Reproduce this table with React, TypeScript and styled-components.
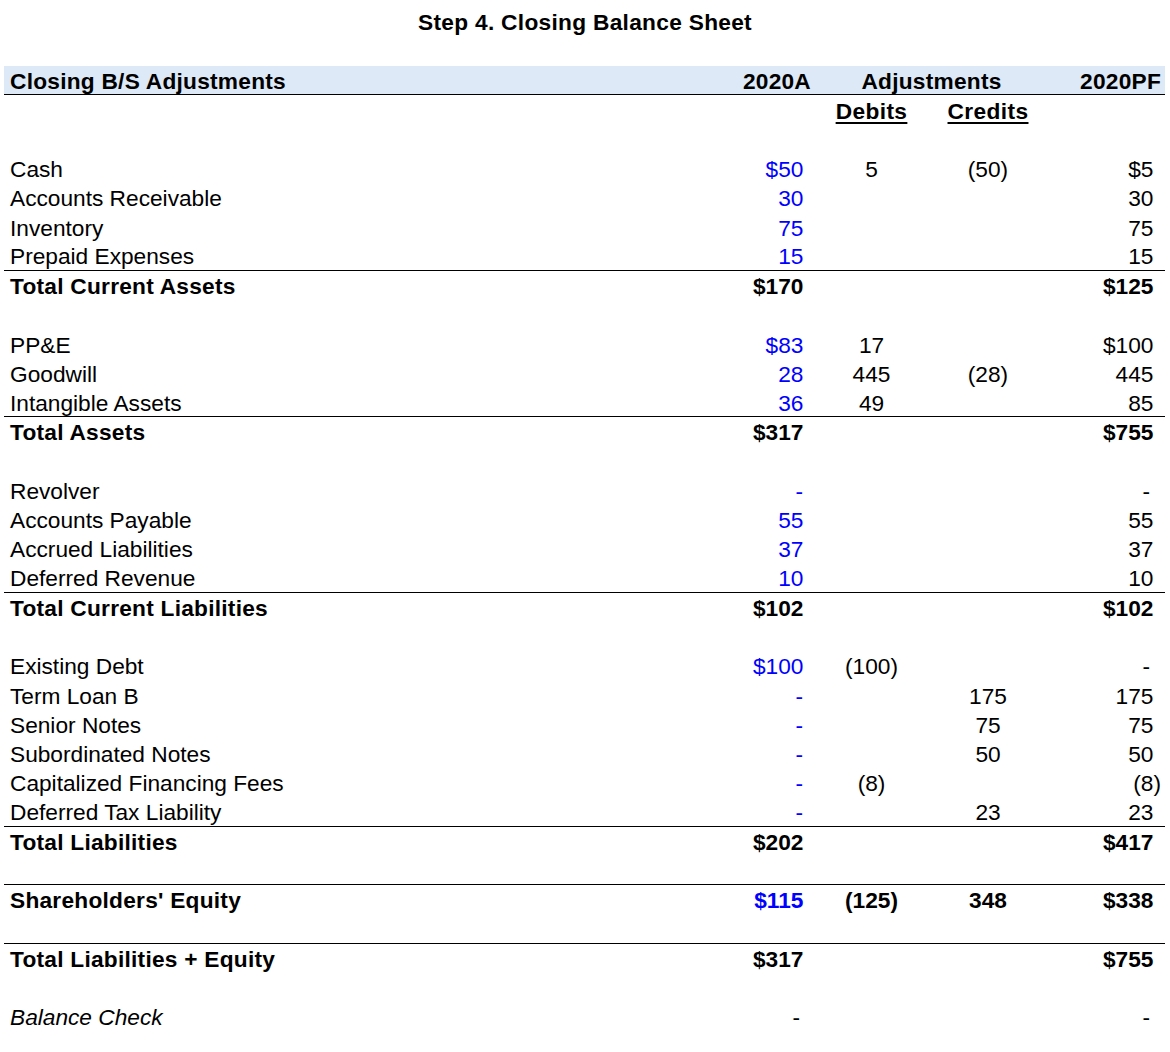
import React from "react";
import styled, { createGlobalStyle, css } from "styled-components";

const GlobalStyle = createGlobalStyle`
  html, body {
    margin: 0;
    padding: 0;
    background: #ffffff;
  }
  body {
    font-family: "Liberation Sans", Arial, sans-serif;
    color: #000000;
  }
`;

const COLS = "716px 95px 113px 120px 117px";
const ROW_H = 29.25;

const Page = styled.div`
  width: 1170px;
  padding: 0 0 0 4px;
  box-sizing: border-box;
  font-size: 22.7px;
`;

const Title = styled.h1`
  margin: 0 0 22px -4px;
  height: 44px;
  line-height: 44px;
  text-align: center;
  font-size: 22.7px;
  font-weight: 700;
  letter-spacing: 0.3px;
`;

const Sheet = styled.div`
  width: 1161px;
  display: flex;
  flex-direction: column;
`;

const Row = styled.div<{ $border?: boolean; $head?: boolean }>`
  display: grid;
  grid-template-columns: ${COLS};
  height: ${ROW_H}px;
  box-sizing: border-box;
  padding-top: 2px;
  align-items: center;
  line-height: 1;
  ${(p) => p.$border && css`border-bottom: 1px solid #000;`}
  ${(p) =>
    p.$head &&
    css`
      background: #dde9f6;
      border-bottom: 1px solid #000;
      font-weight: 700;
      letter-spacing: 0.25px;
    `}
`;

const Label = styled.div<{ $bold?: boolean; $italic?: boolean }>`
  padding-left: 6px;
  white-space: nowrap;
  font-weight: ${(p) => (p.$bold ? 700 : 400)};
  font-style: ${(p) => (p.$italic ? "italic" : "normal")};
  letter-spacing: ${(p) => (p.$bold ? "0.25px" : "0")};
`;

const RightCell = styled.div<{ $bold?: boolean; $blue?: boolean; $pad: number }>`
  text-align: right;
  padding-right: ${(p) => p.$pad}px;
  white-space: nowrap;
  font-weight: ${(p) => (p.$bold ? 700 : 400)};
  color: ${(p) => (p.$blue ? "#0000ff" : "#000000")};
`;

const HeadRight = styled.div`
  text-align: right;
  padding-right: 4px;
  white-space: nowrap;
`;

const CenterCell = styled.div<{ $bold?: boolean }>`
  text-align: center;
  white-space: nowrap;
  font-weight: ${(p) => (p.$bold ? 700 : 400)};
`;

const SpanHead = styled.div`
  grid-column: 3 / span 2;
  text-align: center;
  white-space: nowrap;
`;

const SubHead = styled.div`
  text-align: center;
  font-weight: 700;
  letter-spacing: 0.4px;
  text-decoration: underline;
  text-decoration-thickness: 2px;
  text-underline-offset: 3px;
`;

type Kind = "item" | "total" | "blank" | "equity" | "check";

interface Line {
  kind: Kind;
  label?: string;
  a?: string;
  d?: string;
  c?: string;
  pf?: string;
  border?: boolean;
  blueA?: boolean;
}

const lines: Line[] = [
  { kind: "blank" },
  { kind: "item", label: "Cash", a: "$50", d: "5", c: "(50)", pf: "$5", blueA: true },
  { kind: "item", label: "Accounts Receivable", a: "30", pf: "30", blueA: true },
  { kind: "item", label: "Inventory", a: "75", pf: "75", blueA: true },
  { kind: "item", label: "Prepaid Expenses", a: "15", pf: "15", blueA: true, border: true },
  { kind: "total", label: "Total Current Assets", a: "$170", pf: "$125" },
  { kind: "blank" },
  { kind: "item", label: "PP&E", a: "$83", d: "17", pf: "$100", blueA: true },
  { kind: "item", label: "Goodwill", a: "28", d: "445", c: "(28)", pf: "445", blueA: true },
  { kind: "item", label: "Intangible Assets", a: "36", d: "49", pf: "85", blueA: true, border: true },
  { kind: "total", label: "Total Assets", a: "$317", pf: "$755" },
  { kind: "blank" },
  { kind: "item", label: "Revolver", a: "-", pf: "-", blueA: true },
  { kind: "item", label: "Accounts Payable", a: "55", pf: "55", blueA: true },
  { kind: "item", label: "Accrued Liabilities", a: "37", pf: "37", blueA: true },
  { kind: "item", label: "Deferred Revenue", a: "10", pf: "10", blueA: true, border: true },
  { kind: "total", label: "Total Current Liabilities", a: "$102", pf: "$102" },
  { kind: "blank" },
  { kind: "item", label: "Existing Debt", a: "$100", d: "(100)", pf: "-", blueA: true },
  { kind: "item", label: "Term Loan B", a: "-", c: "175", pf: "175", blueA: true },
  { kind: "item", label: "Senior Notes", a: "-", c: "75", pf: "75", blueA: true },
  { kind: "item", label: "Subordinated Notes", a: "-", c: "50", pf: "50", blueA: true },
  { kind: "item", label: "Capitalized Financing Fees", a: "-", d: "(8)", pf: "(8)", blueA: true },
  { kind: "item", label: "Deferred Tax Liability", a: "-", c: "23", pf: "23", blueA: true, border: true },
  { kind: "total", label: "Total Liabilities", a: "$202", pf: "$417" },
  { kind: "blank", border: true },
  { kind: "equity", label: "Shareholders' Equity", a: "$115", d: "(125)", c: "348", pf: "$338", blueA: true },
  { kind: "blank", border: true },
  { kind: "total", label: "Total Liabilities + Equity", a: "$317", pf: "$755" },
  { kind: "blank" },
  { kind: "check", label: "Balance Check", a: "-", pf: "-" },
];

const padFor = (v: string | undefined, dashPad: number) => {
  if (!v) return 11.6;
  if (v.endsWith(")")) return 4;
  if (v === "-") return dashPad;
  return 11.6;
};

const SheetRow: React.FC<{ line: Line }> = ({ line }) => {
  if (line.kind === "blank") {
    return <Row $border={line.border} />;
  }
  const bold = line.kind === "total" || line.kind === "equity";
  const check = line.kind === "check";
  return (
    <Row $border={line.border}>
      <Label $bold={bold} $italic={check}>
        {line.label}
      </Label>
      <RightCell $bold={bold} $blue={line.blueA} $pad={padFor(line.a, check ? 15 : 12)}>
        {line.a}
      </RightCell>
      <CenterCell $bold={bold}>{line.d}</CenterCell>
      <CenterCell $bold={bold}>{line.c}</CenterCell>
      <RightCell $bold={bold} $pad={padFor(line.pf, 15)}>
        {line.pf}
      </RightCell>
    </Row>
  );
};

export default function App() {
  return (
    <>
      <GlobalStyle />
      <Page>
        <Title>Step 4. Closing Balance Sheet</Title>
        <Sheet>
          <Row $head>
            <Label $bold>Closing B/S Adjustments</Label>
            <HeadRight>2020A</HeadRight>
            <SpanHead>Adjustments</SpanHead>
            <HeadRight>2020PF</HeadRight>
          </Row>
          <Row>
            <div />
            <div />
            <SubHead>Debits</SubHead>
            <SubHead>Credits</SubHead>
            <div />
          </Row>
          {lines.map((l, i) => (
            <SheetRow key={i} line={l} />
          ))}
        </Sheet>
      </Page>
    </>
  );
}
